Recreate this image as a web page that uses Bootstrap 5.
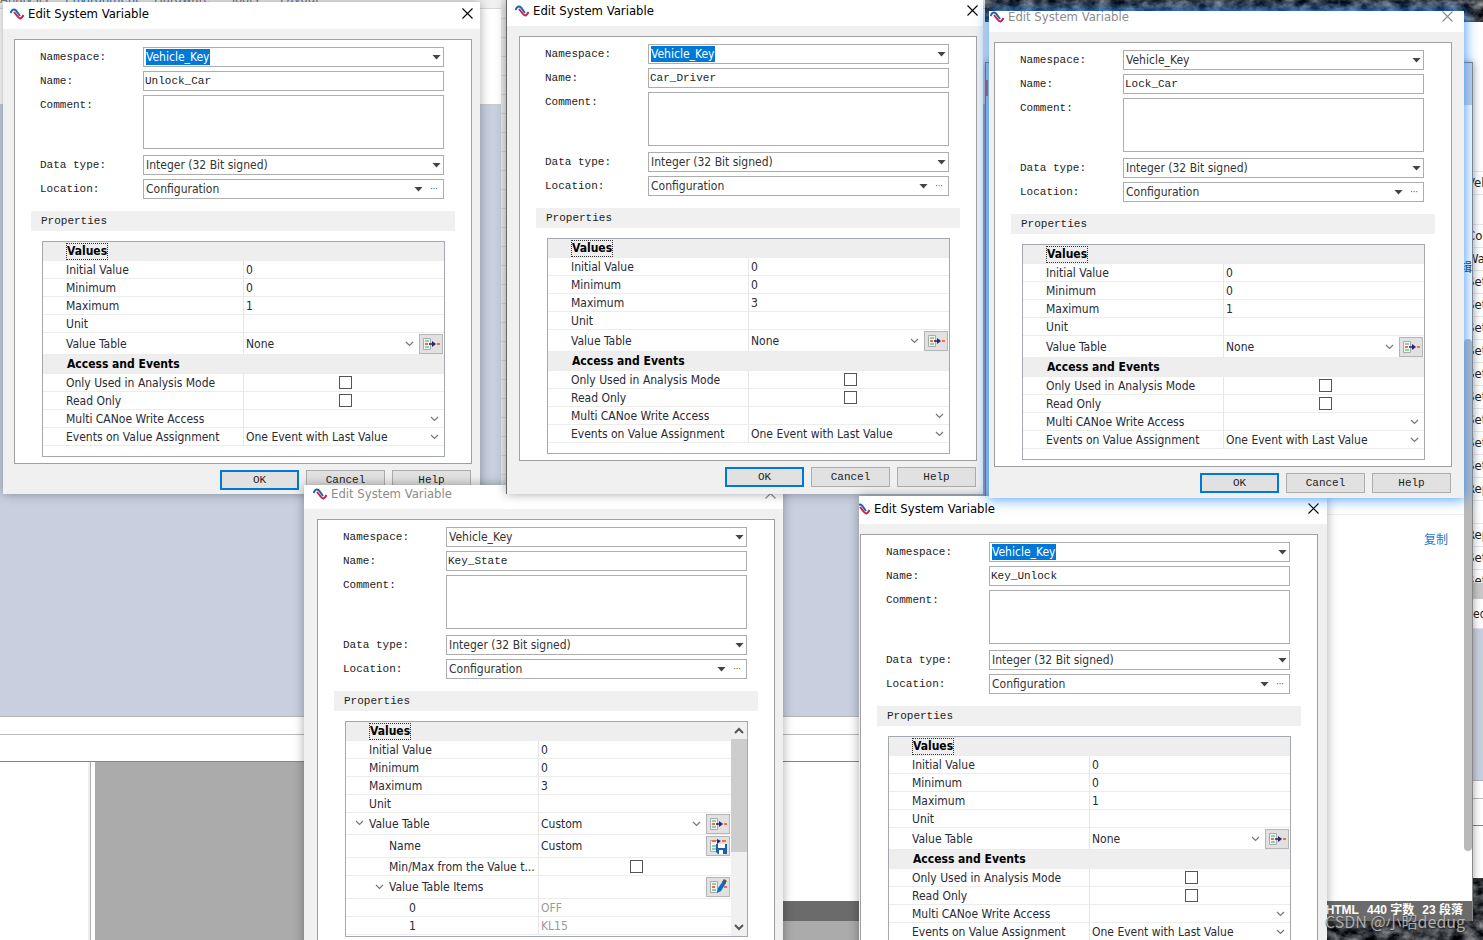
<!DOCTYPE html>
<html lang="en">
<head>
<meta charset="utf-8">
<meta name="viewport" content="width=device-width, initial-scale=1">
<title>Edit System Variable</title>
<link href="https://cdn.jsdelivr.net/npm/bootstrap@5.3.0/dist/css/bootstrap.min.css" rel="stylesheet">
<style>
:root{--face:#f0f0f0;--line:#adadad;--work:#c8d0e0;--ui:"DejaVu Sans Condensed","Noto Sans CJK SC",sans-serif;--fixed:"Liberation Mono","Noto Sans Mono CJK SC",monospace}
body{font-family:var(--ui);font-size:12px;line-height:16px;color:#222}
.desktop{height:100vh;background:#fff}
svg{display:block}

/* application behind the dialogs */
.ribbon{height:105px;background:#fff;border-bottom:1px solid #ccc}
.ribbon-tabs{height:9px;background:#f1f1f1;border-bottom:1px solid #d8d8d8;line-height:16px;font-size:13px}
.ribbon-tabs a{color:#777;text-decoration:none;margin-top:-9px}
.ribbon-tabs a.current{color:#2b7cd3}
.workspace{height:612px;background:var(--work);border-bottom:1px solid #b4b6ba}
.strip-a{height:18px;border-bottom:1px solid #b9b9b9}
.strip-b{height:27px;border-bottom:1px solid #858585}
.tree-pane{width:91px;border-right:1px solid #b0b0b0;box-shadow:inset -2px 0 #eee}
.mdi{background:#ababab;margin-left:4px}

/* partly hidden windows */
.pane{position:absolute;overflow:hidden}
.sliver{left:501px;top:0;width:5px;height:494px;background:repeating-linear-gradient(#e9e9e9 0 18px,#d4d4d4 18px 19px)}
.rock{left:985px;top:0;right:0;height:22px;background:#33383f}
.rock-low{left:1327px;right:0;top:878px;bottom:0;background:#3b3e40}
.page-gap{left:783px;top:762px;width:76px;bottom:0;background:#fff}
.statusbar{background:#6b6b6b;height:20px}
.editor{left:985px;top:62px;width:488px;height:859px;background:#fff;border-top:1px solid #777;border-right:1px solid #888;border-left:1px solid #777;box-shadow:0 0 8px rgba(0,0,0,.4)}
.editor-cap{height:42px;background:var(--work)}
.editor-side{left:0;top:42px;bottom:420px;width:4px;background:#b8d3f3}
.editor-mark{left:0;top:17px;width:2px;height:16px;background:#d0504a}
.editor-rule{border-top:1px solid #eee}
.copy-link{color:#1f78d1;text-decoration:none}
.thumb{right:0;top:276px;width:8px;height:512px;background:#b9b9b9;border-radius:4px}
.status-text{color:#fff;font:700 12px/18px "Liberation Sans","Noto Sans CJK SC",sans-serif;right:0;left:0;bottom:0;padding-right:9px}
.outline{left:1473px;right:0;top:22px;height:856px;background:#fff}
.outline li{height:23px;border-bottom:1px solid #e6e6e6;margin-left:-6px;font-size:13px;line-height:22px;overflow:hidden}
.watermark{left:1325px;top:911px;color:rgba(225,225,225,.7);font:16px/20px "Noto Sans CJK SC",sans-serif;white-space:nowrap;overflow:visible;text-shadow:0 1px 1px #333}

/* dialog */
.dlg{position:absolute;overflow:hidden;background:var(--face);box-shadow:0 0 10px rgba(0,0,0,.35)}
.dlg-body{width:477px;padding:0 8px 4px 11px}
.dlg-active{box-shadow:0 0 12px 1px rgba(40,140,255,.85)}
.dlg-edge{border-left:1px solid #666}
.dlg-title{height:32px;margin:0 -30px;padding:1px 29px 0 26px;background:#fff;font:13px/30px var(--ui);color:#000}
.dlg-title.off{color:#8b8b8b}
.dlg-title button{width:11px;height:30px;padding:0}
.panel{margin-top:10px;background:#fff;border:1px solid #a0a0a0;height:425px}
.form-lines{padding:7px 27px 0 25px}
.form-lines label{width:103px;font:11px/20px var(--fixed);color:#222}
.box{border:1px solid var(--line);border-radius:0;background:#fff;color:#333;font-size:12px;line-height:16px;padding:0 2px;outline:0}
.h-field{height:20px}
.h-memo{height:54px;resize:none;margin-bottom:2px}
.typed{font:11px/16px var(--fixed);color:#222;padding:0 1px}
.bare{border:0;background-color:transparent;color:inherit;font:inherit;padding:0;outline:0;appearance:none;min-width:0;border-radius:0}
.name-edit{width:68px}
.name-edit.picked{background:#0078d7;color:#fff;width:64px}
.arrow{width:9px;height:5px;background:#444;clip-path:polygon(0 0,100% 0,50% 100%)}
.dots{width:14px;line-height:8px;font-size:9px;color:#444}
.section{margin:12px 16px 0;height:20px;padding-left:10px;background:var(--face);font:11px/20px var(--fixed);color:#222}
.sheet{margin:10px 26px 0 27px;height:216px;border:1px solid #a3a7ae}
.sheet table{table-layout:fixed;border-collapse:separate;border-spacing:0;width:100%}
.sheet td,.sheet th{height:18px;padding:0;line-height:16px;vertical-align:middle;border-bottom:1px solid #ececec;font-weight:400;white-space:nowrap;overflow:hidden;color:#2a2a35}
.sheet tbody th{border-right:1px solid #e6e6e6;padding-left:23px;text-overflow:ellipsis}
.sheet .cap th{height:19px;background:#eee;font-weight:700;color:#000;padding-left:24px;border-right:0}
.sheet .cap span{display:inline-block;line-height:15px}
.sheet .cap .focus{outline:1px dotted #333}
.sheet td{padding-left:2px}
.sheet .tall>*{height:22px}
.sheet .tall.sub1>*{height:23px}
.sheet .sub1 th{padding-left:43px}
.sheet .sub2 th{padding-left:63px}
.sheet .dim td{color:#999}
.sheet input[type=checkbox]{display:block;margin:0 auto;appearance:none;width:13px;height:13px;border:1px solid #555;background:#fff}
.cell{display:flex;align-items:center;height:17px}
.tall .cell{height:21px}
.cell select{flex:1;height:16px}
.chev{width:9px;height:6px;flex:none;margin-right:5px}
.tool{width:24px;height:20px;border:1px solid #b5b5b5;background:#e1e1e1;padding:1px 2px;margin-right:1px}
.twist{display:inline-block;margin:0 5px 2px -14px;vertical-align:middle}
.bar{width:16px;flex:none;background:var(--face)}
.bar i{height:113px;background:#cdcdcd}
.dlg-foot{padding:6px 1px 0 0;gap:7px}
.push{width:79px;height:20px;padding:0;border:1px solid #adadad;background:#e1e1e1;font:11px/16px var(--fixed);color:#222}
.push.main{border:2px solid #0078d7}
</style>
</head>
<body>
<svg class="d-none" aria-hidden="true">
  <symbol id="i-logo" viewBox="0 0 14 12"><path d="M4 4l4 5c2 2.500 4 1.500 5.500-2" fill="none" stroke="#c8204f" stroke-width="2"/><path d="M.5 5C2 1.500 4 .5 6 2.500l4 5.500" fill="none" stroke="#2365a8" stroke-width="2"/></symbol>
  <symbol id="i-close" viewBox="0 0 11 11"><path d="M.5.5l10 10m0-10l-10 10" fill="none" stroke="currentColor" stroke-width="1.1"/></symbol>
  <symbol id="i-down" viewBox="0 0 9 6"><path d="M1 1l3.500 3.500L8 1" fill="none" stroke="#777" stroke-width="1.200"/></symbol>
  <symbol id="i-doc" viewBox="0 0 18 16"><path d="M1.500 2.500h7v11h-7z" fill="#f4f4f4" stroke="#aaa"/><path d="M3 5h4M3 11h4" stroke="#5fc79a" stroke-width="1.500"/><path d="M3 8h3M15 8h3" stroke="#ff6a3c" stroke-width="2"/></symbol>
  <symbol id="i-import" viewBox="0 0 18 16"><use href="#i-doc"/><path d="M7 8h5" stroke="#2b2466" stroke-width="1.500"/><path d="M10 5l4 3-4 3z" fill="#2b2466"/></symbol>
  <symbol id="i-save" viewBox="0 0 18 16"><path d="M1.500 2.500h7v11h-7z" fill="#f4f4f4" stroke="#aaa"/><path d="M3 8h4M3 11h4" stroke="#5fc79a" stroke-width="1.500"/><path d="M3 3h4M13 3h4" stroke="#ff6a3c" stroke-width="2"/><path d="M8 1l4 2-4 3z" fill="#2b2466"/><path d="M7 6h11v10H9l-2-2z" fill="#1c5fa8"/><path d="M9 6h7v4H9zM10 12h4v4h-4z" fill="#fff"/></symbol>
  <symbol id="i-edit" viewBox="0 0 18 16"><use href="#i-doc"/><path d="M8 14l1-5 5-7 3 2-5 8z" fill="#0f6ad0"/><path d="M13 3l2-3 3 2-2 3z" fill="#555"/></symbol>
</svg>

<main class="desktop position-relative overflow-hidden">
  <div class="d-flex flex-column h-100">
    <div class="ribbon">
      <nav class="ribbon-tabs d-flex overflow-hidden"><a href="#" style="width:65px">Analysis</a><a href="#" class="current" style="width:89px">Environment</a><a href="#" style="width:76px">Hardware</a><a href="#" style="width:50px">Tools</a><a href="#">Layout</a></nav>
    </div>
    <div class="workspace"></div>
    <div class="strip-a"></div>
    <div class="strip-b"></div>
    <div class="d-flex flex-grow-1"><div class="tree-pane"></div><div class="mdi flex-grow-1"></div></div>
  </div>

  <div class="pane sliver"></div>
  <div class="pane rock"><svg width="100%" height="100%"><filter id="stone" color-interpolation-filters="sRGB"><feTurbulence type="fractalNoise" baseFrequency=".08 .12" numOctaves="5" seed="4"/><feColorMatrix values=".9 0 0 0 -.22 .9 0 0 0 -.21 .9 0 0 0 -.19 0 0 0 0 1"/></filter><rect width="100%" height="100%" filter="url(#stone)"/></svg></div>
  <div class="pane outline">
    <ul class="list-unstyled mb-0">
      <li style="height:150px"></li><li>Vehicle</li><li style="height:30px"></li><li>Con</li><li>Wait</li><li>Set</li><li>Set</li><li>Set</li><li>Set</li><li>Set</li><li>Set</li><li>Set</li><li>Set</li><li>Set</li><li>Rep</li><li></li><li>Rep</li><li>Set</li><li style="height:13px">Set</li>
    </ul>
    <div style="height:16px;background:#c9c9c9"></div><div class="border-bottom" style="height:30px;line-height:30px">eq</div>
    <div style="height:152px;background:var(--work);border-bottom:1px solid #b4b4b4"></div><div class="strip-a"></div><div class="strip-b"></div>
  </div>
  <div class="pane rock-low"><svg width="100%" height="100%"><rect width="100%" height="100%" filter="url(#stone)"/></svg></div>
  <div class="pane page-gap d-flex flex-column"><div style="height:139px"></div><div class="statusbar"></div><div class="mdi flex-grow-1 ms-0"></div></div>
  <section class="pane editor">
    <div class="editor-cap"></div>
    <div class="pane editor-side"></div><div class="pane editor-mark"></div>
    <div class="text-end" style="padding:155px 0 0"><a href="#" class="text-dark text-decoration-none">辑</a></div>
    <div class="editor-rule" style="margin-top:238px"></div>
    <div class="text-end" style="padding:17px 24px 0 0"><a href="#" class="copy-link">复制</a></div>
    <div class="pane thumb"></div>
    <div class="pane statusbar status-text d-flex justify-content-end gap-2"><span>HTML</span><span>440 字数</span><span>23 段落</span></div>
  </section>

  <div id="dialogs"></div>
  <div class="pane watermark">CSDN @小昭dedug</div>
</main>

<script>
const dialogs = [
  { id: 'unlock', name: 'Unlock_Car', max: 1, picked: true,  x: 3,   y: 2,   w: 477, h: 492, dx: 0,   dy: -5 },
  { id: 'state',  name: 'Key_State',  max: 3, off: true, custom: true, x: 304, y: 485, w: 479, h: 480, dx: 2, dy: -8 },
  { id: 'driver', name: 'Car_Driver', max: 3, picked: true,  x: 506, y: 0,   w: 477, h: 494, dx: 1,   dy: -6, cls: 'dlg-edge' },
  { id: 'kunlock',name: 'Key_Unlock', max: 1, picked: true,  x: 859, y: 496, w: 468, h: 480, dx: -10, dy: -4 },
  { id: 'lock',   name: 'Lock_Car',   max: 1, off: true,     x: 989, y: 11,  w: 475, h: 487, dx: -6,  dy: -11, cls: 'dlg-active' }
];
const icon = (n, w, h, c = '') => `<svg class="${c}" width="${w}" height="${h}" aria-hidden="true"><use href="#i-${n}"/></svg>`;
const chev = icon('down', 9, 6, 'chev');
const tool = (n, t) => `<button type="button" class="tool ms-auto" aria-label="${t}">${icon(n, 18, 16)}</button>`;
const row = (k, v, c = '') => `<tr class="${c}"><th scope="row">${k}</th><td>${v}</td></tr>`;
const cap = (t, c = '') => `<tr class="cap"><th colspan="2"><span class="${c}">${t}</span></th></tr>`;
const pick = (v, t, extra = '') => `<div class="cell"><select class="bare" aria-label="${t}"><option>${v}</option></select>${chev}${extra}</div>`;
const check = t => `<input type="checkbox" aria-label="${t}">`;
const twist = icon('down', 9, 6, 'twist');

function sheet(d) {
  const top = cap('Values', 'focus') + row('Initial Value', 0) + row('Minimum', 0) + row('Maximum', d.max) + row('Unit', '');
  if (d.custom) {
    return top + row(twist + 'Value Table', pick('Custom', 'Value Table', tool('import', 'Import')), 'tall')
      + row('Name', `<div class="cell">Custom${tool('save', 'Save')}</div>`, 'tall sub1')
      + row('Min/Max from the Value t...', check('Min/Max from the Value table'), 'sub1')
      + row(twist + 'Value Table Items', `<div class="cell">${tool('edit', 'Edit items')}</div>`, 'tall sub1')
      + row('0', 'OFF', 'sub2 dim') + row('1', 'KL15', 'sub2 dim');
  }
  return top + row('Value Table', pick('None', 'Value Table', tool('import', 'Import')), 'tall')
    + cap('Access and Events')
    + row('Only Used in Analysis Mode', check('Only Used in Analysis Mode'))
    + row('Read Only', check('Read Only'))
    + row('Multi CANoe Write Access', pick('', 'Multi CANoe Write Access'))
    + row('Events on Value Assignment', pick('One Event with Last Value', 'Events on Value Assignment'));
}

document.getElementById('dialogs').innerHTML = dialogs.map(d => `
<section class="dlg ${d.cls || ''}" style="left:${d.x}px;top:${d.y}px;width:${d.w}px;height:${d.h}px">
  <div class="dlg-body" style="margin:${d.dy}px 0 0 ${d.dx}px">
    <header class="dlg-title d-flex align-items-center ${d.off ? 'off' : ''}">
      ${icon('logo', 14, 12)}<span class="ps-1">Edit System Variable</span>
      <button type="button" class="bare ms-auto d-flex align-items-center" aria-label="Close">${icon('close', 11, 11)}</button>
    </header>
    <div class="panel">
      <form class="form-lines d-flex flex-column gap-1">
        <div class="d-flex"><label for="${d.id}-ns">Namespace:</label>
          <div class="box h-field flex-grow-1 d-flex align-items-center"><input id="${d.id}-ns" class="bare name-edit ${d.picked ? 'picked' : ''}" value="Vehicle_Key"><span class="arrow ms-auto"></span></div></div>
        <div class="d-flex"><label for="${d.id}-name">Name:</label><input id="${d.id}-name" class="box h-field typed flex-grow-1" value="${d.name}"></div>
        <div class="d-flex"><label for="${d.id}-c">Comment:</label><textarea id="${d.id}-c" class="box h-memo flex-grow-1"></textarea></div>
        <div class="d-flex"><label for="${d.id}-t">Data type:</label>
          <div class="box h-field flex-grow-1 d-flex align-items-center"><select id="${d.id}-t" class="bare flex-grow-1"><option>Integer (32 Bit signed)</option></select><span class="arrow"></span></div></div>
        <div class="d-flex"><label for="${d.id}-l">Location:</label>
          <div class="box h-field flex-grow-1 d-flex align-items-center"><select id="${d.id}-l" class="bare flex-grow-1"><option>Configuration</option></select><span class="arrow me-1"></span><button type="button" class="bare dots" aria-label="Browse">···</button></div></div>
      </form>
      <div class="section">Properties</div>
      <div class="sheet d-flex">
        <div class="flex-grow-1 overflow-hidden"><table><colgroup><col style="width:${d.custom ? 193 : 201}px"><col></colgroup><tbody>${sheet(d)}</tbody></table></div>
        ${d.custom ? `<div class="bar d-flex flex-column align-items-center"><svg width="16" height="17"><path d="M4 11l4-4 4 4" fill="none" stroke="#555" stroke-width="2"/></svg><i class="w-100"></i><svg class="mt-auto" width="16" height="17"><path d="M4 6l4 4 4-4" fill="none" stroke="#555" stroke-width="2"/></svg></div>` : ''}
      </div>
    </div>
    <footer class="dlg-foot d-flex justify-content-end"><button type="button" class="push main">OK</button><button type="button" class="push">Cancel</button><button type="button" class="push">Help</button></footer>
  </div>
</section>`).join('');
</script>
<script src="https://cdn.jsdelivr.net/npm/bootstrap@5.3.0/dist/js/bootstrap.bundle.min.js"></script>
</body>
</html>
